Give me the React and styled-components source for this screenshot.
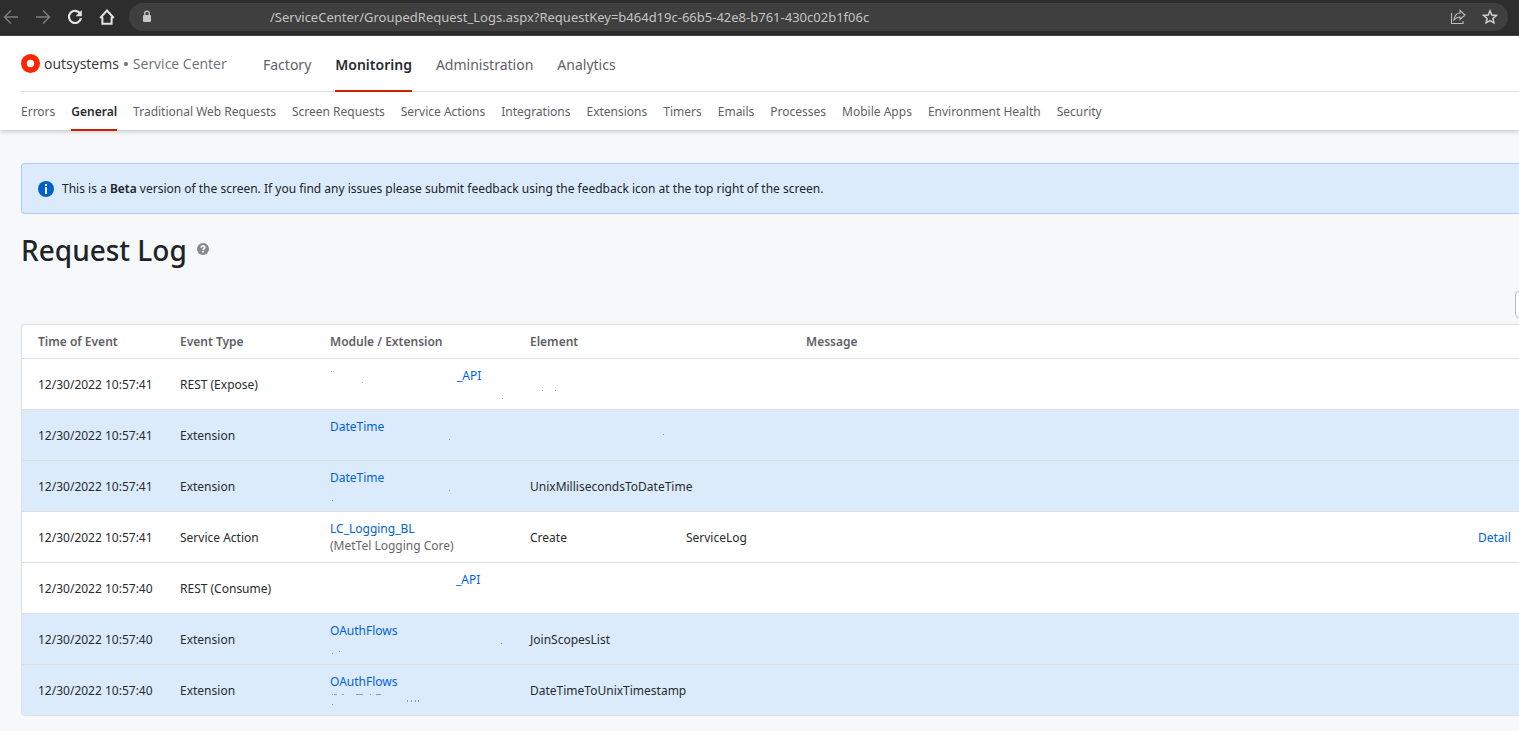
import styled, { createGlobalStyle } from "styled-components";

const mainMenu = ["Factory", "Monitoring", "Administration", "Analytics"];

const subMenu = [
  "Errors",
  "General",
  "Traditional Web Requests",
  "Screen Requests",
  "Service Actions",
  "Integrations",
  "Extensions",
  "Timers",
  "Emails",
  "Processes",
  "Mobile Apps",
  "Environment Health",
  "Security",
];

// specks: [x, y, width, height] of what is left of erased text
const logs = [
  {
    time: "12/30/2022 10:57:41",
    type: "REST (Expose)",
    hidden: { width: 127, specks: [[1, 4, 1, 1], [32, 15, 1, 1]] },
    module: "_API",
    specks: [[172, 14, 1, 1]],
    elementSpecks: [[12, 14, 1, 1], [25, 14, 1, 1]],
  },
  {
    time: "12/30/2022 10:57:41",
    type: "Extension",
    module: "DateTime",
    specks: [[119, 4, 1, 1]],
    elementSpecks: [[133, 7, 1, 1]],
    striped: true,
  },
  {
    time: "12/30/2022 10:57:41",
    type: "Extension",
    module: "DateTime",
    specks: [[119, 4, 1, 1], [2, 14, 1, 1]],
    element: "UnixMillisecondsToDateTime",
    striped: true,
  },
  {
    time: "12/30/2022 10:57:41",
    type: "Service Action",
    module: "LC_Logging_BL",
    parent: "(MetTel Logging Core)",
    element: "Create",
    elementEnd: "ServiceLog",
    detail: true,
  },
  {
    time: "12/30/2022 10:57:40",
    type: "REST (Consume)",
    hidden: { width: 126, specks: [] },
    module: "_API",
  },
  {
    time: "12/30/2022 10:57:40",
    type: "Extension",
    module: "OAuthFlows",
    specks: [[171, 4, 1, 1], [2, 14, 1, 1], [9, 12, 1, 1]],
    element: "JoinScopesList",
    striped: true,
  },
  {
    time: "12/30/2022 10:57:40",
    type: "Extension",
    module: "OAuthFlows",
    specks: [
      [2, 4, 1, 1],
      [4, 4, 3, 1],
      [12, 4, 2, 1],
      [26, 4, 7, 1],
      [40, 4, 1, 1],
      [46, 4, 5, 1],
      [77, 10, 1, 2],
      [81, 10, 1, 2],
      [85, 10, 1, 2],
      [88, 10, 1, 2],
      [2, 14, 1, 1],
    ],
    element: "DateTimeToUnixTimestamp",
    striped: true,
  },
];

const Specks = ({ items, color = "#8d9aa8" }) => (
  <SpeckArt viewBox="0 0 176 17" fill={color} aria-hidden="true">
    {items.map(([x, y, w, h]) => (
      <rect key={`${x}-${y}`} x={x} y={y} width={w} height={h} />
    ))}
  </SpeckArt>
);

const App = () => {
  return (
    <>
      <GlobalStyle />
      <BrowserBar>
        <BarButton aria-label="Back" $color="#7d7d7d">
          <svg width="16" height="16" viewBox="0 0 16 16">
            <path d="M15 8H2M8 1.5 1.5 8 8 14.5" />
          </svg>
        </BarButton>
        <BarButton aria-label="Forward" $color="#7d7d7d">
          <svg width="16" height="16" viewBox="0 0 16 16">
            <path d="M1 8h13M8 1.5 14.5 8 8 14.5" />
          </svg>
        </BarButton>
        <BarButton aria-label="Reload" $color="#e3e3e3">
          <svg width="16" height="16" viewBox="0 0 16 16">
            <path d="M13.2 4.6A6.1 6.1 0 1 0 14 9.2" strokeWidth="2.2" />
            <path d="M14.8 1v6.2H8.6z" fill="currentColor" stroke="none" />
          </svg>
        </BarButton>
        <BarButton aria-label="Home" $color="#e3e3e3">
          <svg width="16" height="16" viewBox="0 0 16 16">
            <path d="M1.2 9 8 1.6 14.800 9M3.400 8v6.700h9.200V8" strokeWidth="2" />
          </svg>
        </BarButton>
        <Address>
          <svg width="10" height="13" viewBox="0 0 10 13">
            <rect x="1" y="5" width="8" height="7" rx="1" fill="#c2c6ca" />
            <path d="M2.8 5V3.4a2.2 2.2 0 0 1 4.4 0V5" fill="none" stroke="#c2c6ca" strokeWidth="1.3" />
          </svg>
          <Url
            type="text"
            aria-label="Address"
            readOnly
            value="/ServiceCenter/GroupedRequest_Logs.aspx?RequestKey=b464d19c-66b5-42e8-b761-430c02b1f06c"
          />
          <BarButton aria-label="Share" $color="#bdbdbd">
            <svg width="16" height="16" viewBox="0 0 16 16">
              <path d="M1.5 4v10.500h11.500V12" strokeWidth="1.1" />
              <path d="M10 1.500 15 6l-5 4.500V8C7.500 7.800 6 8.700 4 11c.3-4.200 2.500-6.600 6-7z" strokeWidth="1.1" />
            </svg>
          </BarButton>
          <BarButton aria-label="Bookmark" $color="#d0d0d0">
            <svg width="16" height="16" viewBox="0 0 16 16">
              <path d="m8 1.800 1.800 4.200 4.500.4-3.400 3 1 4.400L8 11.500l-3.900 2.300 1-4.400-3.400-3 4.500-.4z" strokeWidth="1.500" />
            </svg>
          </BarButton>
        </Address>
      </BrowserBar>

      <Header>
        <TopRow>
          <Brand href="#">
            <svg width="19" height="19" viewBox="0 0 19 19">
              <circle cx="9.500" cy="9.500" r="6.600" fill="none" stroke="#ff2500" strokeWidth="5.800" />
            </svg>
            <BrandName>outsystems</BrandName>
            <BrandDot />
            <BrandProduct>Service Center</BrandProduct>
          </Brand>
          <MainNav>
            {mainMenu.map((item) => (
              <MainLink href="#" key={item} $active={item === "Monitoring"}>
                {item}
              </MainLink>
            ))}
          </MainNav>
        </TopRow>
        <SubNav>
          {subMenu.map((item) => (
            <SubLink href="#" key={item} $active={item === "General"}>
              {item}
            </SubLink>
          ))}
        </SubNav>
      </Header>

      <Content>
        <Alert>
          <svg width="16" height="16" viewBox="0 0 16 16">
            <circle cx="8" cy="8" r="8" fill="#0062c8" />
            <path d="M7 3h2v2H7zM7 6h2v7H7z" fill="#fff" />
          </svg>
          <p>
            This is a <b>Beta</b> version of the screen. If you find any issues
            please submit feedback using the feedback icon at the top right of
            the screen.
          </p>
        </Alert>
        <TitleRow>
          <Title>Request Log</Title>
          <HelpButton aria-label="Help">
            <svg width="12" height="12" viewBox="0 0 12 12">
              <circle cx="6" cy="6" r="6" fill="#87888b" />
              <path d="M4.100 4.600C4.200 2.300 7.900 2.400 7.800 4.400 7.700 5.600 6 5.600 6 7.200" fill="none" stroke="#fff" strokeWidth="1.600" />
              <rect x="5.200" y="8" width="1.600" height="1.600" fill="#fff" />
            </svg>
          </HelpButton>
        </TitleRow>
        <Toolbar>
          <ToolButton aria-label="Options" />
        </Toolbar>
        <Table>
          <colgroup>
            <Col $width={142} />
            <Col $width={150} />
            <Col $width={200} />
            <Col $width={276} />
            <col />
            <Col $width={57} />
          </colgroup>
          <thead>
            <tr>
              <Th>Time of Event</Th>
              <Th>Event Type</Th>
              <Th>Module / Extension</Th>
              <Th>Element</Th>
              <Th>Message</Th>
              <Th />
            </tr>
          </thead>
          <tbody>
            {logs.map((log, i) => (
              <Row key={i} $striped={log.striped}>
                <Td>{log.time}</Td>
                <Td>{log.type}</Td>
                <Td>
                  <Line>
                    {log.hidden && (
                      <Blank $width={log.hidden.width}>
                        <Specks items={log.hidden.specks} color="#7fb0e6" />
                      </Blank>
                    )}
                    <TextLink href="#">{log.module}</TextLink>
                  </Line>
                  <Line>
                    {log.parent && <Muted>{log.parent}</Muted>}
                    {log.specks && <Specks items={log.specks} />}
                  </Line>
                </Td>
                <Td>
                  <Line>
                    {log.element}
                    {log.elementEnd && <Blank $width={119} />}
                    {log.elementEnd}
                    {log.elementSpecks && <Specks items={log.elementSpecks} />}
                  </Line>
                </Td>
                <Td />
                <Td>{log.detail && <TextLink href="#">Detail</TextLink>}</Td>
              </Row>
            ))}
          </tbody>
        </Table>
      </Content>
    </>
  );
};

export default App;

const GlobalStyle = createGlobalStyle`
  * {
    box-sizing: border-box;
  }
  body {
    margin: 0;
    background-color: #f7f8fa;
    color: #272b30;
    font-family: "Noto Sans", sans-serif;
    font-size: 12px;
    line-height: 17px;
    overflow-x: hidden;
  }
  a {
    text-decoration: none;
  }
`;

const BrowserBar = styled.div`
  display: flex;
  align-items: center;
  gap: 16px;
  height: 36px;
  padding: 0 11px 2px 3px;
  background-color: #2d2d2d;
  border-bottom: 1px solid #4a4a4a;
`;
const BarButton = styled.button`
  display: flex;
  padding: 0;
  border: none;
  background: none;
  color: ${(props) => props.$color};
  cursor: pointer;

  svg {
    fill: none;
    stroke: currentColor;
    stroke-width: 1.5;
  }
`;
const Address = styled.div`
  flex: 1;
  display: flex;
  align-items: center;
  gap: 16px;
  height: 28px;
  margin-left: -2px;
  padding: 0 10px 0 13px;
  border-radius: 14px;
  background-color: #3f3f3f;
`;
const Url = styled.input`
  flex: 1;
  padding: 0 0 0 102px;
  border: none;
  outline: none;
  background: none;
  color: #c4c4c4;
  font-family: inherit;
  font-size: 13px;
`;

const Header = styled.header`
  padding-left: 21px;
  background-color: #fff;
  box-shadow: 0 1px 5px rgba(0, 0, 0, 0.25);
`;
const TopRow = styled.div`
  display: flex;
  height: 56px;
  border-bottom: 1px solid #dee0e2;
`;
const Brand = styled.a`
  display: flex;
  align-items: center;
  gap: 4px;
  width: 242px;
  font-family: "Open Sans", sans-serif;
  font-size: 14px;
`;
const BrandName = styled.span`
  color: #333;
`;
const BrandDot = styled.span`
  width: 4px;
  height: 4px;
  margin: 0 1px;
  border-radius: 50%;
  background-color: #6a7178;
`;
const BrandProduct = styled.span`
  color: #6a7178;
`;
const MainNav = styled.nav`
  display: flex;
  gap: 24px;
  height: 56px;
`;
const MainLink = styled.a`
  display: flex;
  align-items: center;
  padding-top: 2px;
  border-bottom: 2px solid ${(props) => (props.$active ? "#cd1f00" : "transparent")};
  color: ${(props) => (props.$active ? "#272b30" : "#5f6166")};
  font-size: 14px;
  font-weight: ${(props) => (props.$active ? 600 : 400)};
`;
const SubNav = styled.nav`
  display: flex;
  gap: 16px;
  height: 38px;
`;
const SubLink = styled.a`
  display: flex;
  align-items: center;
  height: 39px;
  padding-top: 2px;
  border-bottom: 2px solid ${(props) => (props.$active ? "#cd1f00" : "transparent")};
  color: ${(props) => (props.$active ? "#272b30" : "#5f6166")};
  font-weight: ${(props) => (props.$active ? 600 : 400)};
  white-space: nowrap;
`;

const Content = styled.main`
  padding: 33px 0 16px 21px;
`;
const Alert = styled.div`
  display: flex;
  align-items: center;
  gap: 8px;
  padding: 16px;
  border: 1px solid #a9cdf5;
  border-right: none;
  border-radius: 4px 0 0 4px;
  background-color: #dcebfb;
  color: #202327;

  p {
    margin: 0;
  }
  b {
    font-weight: 600;
  }
`;
const TitleRow = styled.div`
  display: flex;
  align-items: center;
  gap: 10px;
  margin-top: 16px;
`;
const Title = styled.h1`
  margin: 0;
  color: #202327;
  font-size: 28px;
  font-weight: 500;
  line-height: 40px;
`;
const HelpButton = styled.button`
  display: flex;
  padding: 0 0 2px;
  border: none;
  background: none;
  cursor: pointer;
`;
const Toolbar = styled.div`
  display: flex;
  justify-content: flex-end;
  margin: 21px 0 6px;
`;
const ToolButton = styled.button`
  width: 32px;
  height: 27px;
  margin-right: -28px;
  border: 1px solid #b9bbbd;
  border-radius: 4px;
  background-color: #fff;
`;

const Table = styled.table`
  width: 100%;
  table-layout: fixed;
  border-collapse: separate;
  border-spacing: 0;
  border: 1px solid #dee0e2;
  border-width: 1px 0 0 1px;
  border-radius: 4px 0 0 4px;
  background-color: #fff;
  overflow: hidden;
`;
const Col = styled.col`
  width: ${(props) => props.$width}px;
`;
const Th = styled.th`
  padding: 8px 0 8px 16px;
  border-bottom: 1px solid #dee0e2;
  color: #5f6166;
  font-weight: 600;
  text-align: left;
`;
const Row = styled.tr`
  background-color: ${(props) => (props.$striped ? "#dcebfb" : "#fff")};
`;
const Td = styled.td`
  padding: 8px 0 8px 16px;
  border-bottom: 1px solid #dedfe1;
`;
const Line = styled.div`
  display: flex;
  height: 17px;
  white-space: nowrap;
`;
const Blank = styled.span`
  width: ${(props) => props.$width}px;
`;
const SpeckArt = styled.svg`
  display: block;
  width: 176px;
  height: 17px;
`;
const TextLink = styled.a`
  color: #0062d9;
`;
const Muted = styled.span`
  color: #66686c;
`;
